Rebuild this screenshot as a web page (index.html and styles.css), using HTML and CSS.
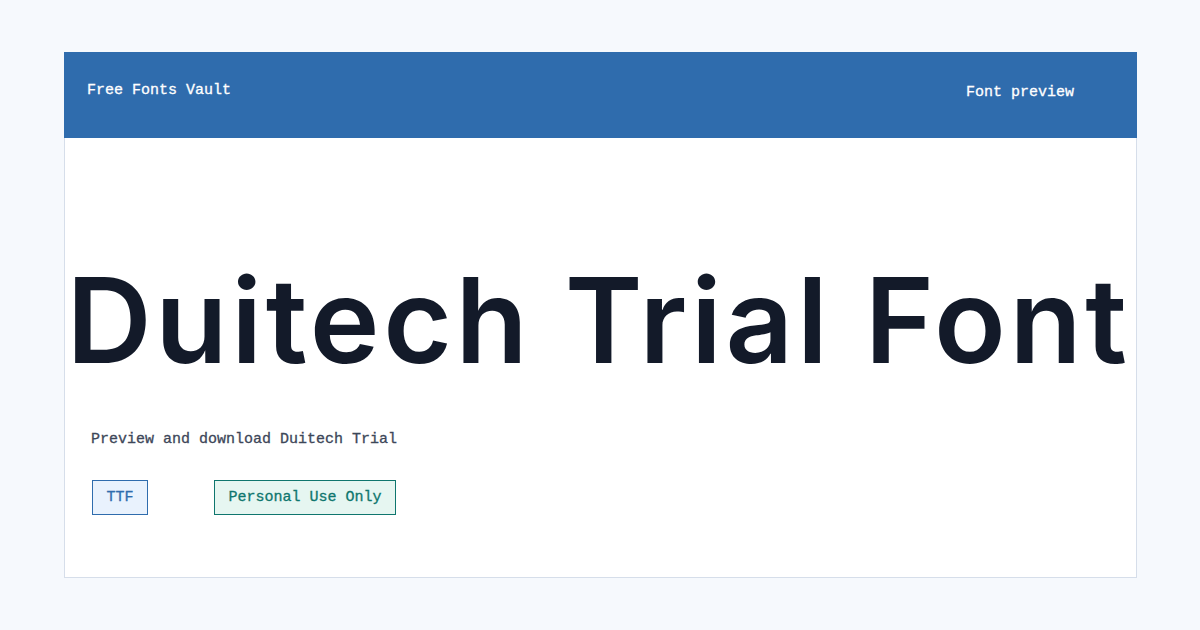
FILE: index.html
```html
<!DOCTYPE html>
<html lang="en">
<head>
<meta charset="utf-8">
<title>Duitech Trial Font</title>
<link rel="stylesheet" href="styles.css">
</head>
<body>
  <main class="card">
    <header class="topbar">
      <span class="brand">Free Fonts Vault</span>
      <span class="nav">Font preview</span>
    </header>
    <section class="preview">
      <h1 class="title">Duitech Trial Font</h1>
      <p class="subtitle">Preview and download Duitech Trial</p>
      <div class="tags">
        <span class="tag tag-format">TTF</span>
        <span class="tag tag-license">Personal Use Only</span>
      </div>
    </section>
  </main>
</body>
</html>
```

FILE: styles.css
```css
html, body {
  margin: 0;
  padding: 0;
}

body {
  background: #f6f9fd;
  width: 1200px;
  height: 630px;
  padding: 52px 63px 0 64px;
  box-sizing: border-box;
  font-family: "Liberation Mono", "DejaVu Sans Mono", monospace;
}

.card {
  height: 526px;
  background: #ffffff;
  border: 1px solid #d6deea;
  border-top: none;
  box-sizing: border-box;
  display: flex;
  flex-direction: column;
}

.topbar {
  height: 86px;
  margin: 0 -1px;
  background: #2f6cad;
  color: #ffffff;
  display: flex;
  justify-content: space-between;
  align-items: flex-start;
  padding: 30px 63px 0 23px;
  box-sizing: border-box;
  font-size: 15px;
  -webkit-text-stroke: 0.3px #ffffff;
}

.nav {
  margin-top: 2px;
}

.preview {
  flex: 1;
  display: flex;
  flex-direction: column;
  padding: 0 26px;
}

.title {
  margin: 112px -38px 0 -42px;
  text-align: center;
  white-space: nowrap;
  font-family: "Inter", "Noto Sans", sans-serif;
  font-weight: 600;
  font-size: 118px;
  line-height: 140px;
  color: #131a29;
  letter-spacing: 3.6px;
}

.subtitle {
  margin: 41px 0 0;
  font-size: 15px;
  color: #3d4759;
  -webkit-text-stroke: 0.3px #3d4759;
}

.tags {
  display: flex;
  gap: 66px;
  margin-top: 32px;
  padding-left: 1px;
}

.tag {
  height: 35px;
  box-sizing: border-box;
  padding: 0 13.5px;
  display: flex;
  align-items: center;
  font-size: 15px;
  border: 1px solid;
}

.tag-format {
  background: #e9f2fd;
  border-color: #2f6cad;
  color: #2f6cad;
  -webkit-text-stroke: 0.3px #2f6cad;
}

.tag-license {
  background: #e6f6f1;
  border-color: #0f766e;
  color: #0f766e;
  -webkit-text-stroke: 0.3px #0f766e;
}
```
